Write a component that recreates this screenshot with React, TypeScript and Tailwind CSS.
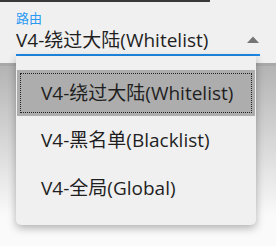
const font = { fontFamily: '"Open Sans", "Noto Sans CJK SC", sans-serif' };

const options = ["V4-绕过大陆(Whitelist)", "V4-黑名单(Blacklist)", "V4-全局(Global)"];

export default function App() {
  return (
    <div className="relative flex h-[246px] w-[276px] flex-col overflow-hidden bg-[#f0f0f0]" style={font}>
      <div className="h-[2px] w-[210px] bg-[#3a3a3a]" />
      <div className="px-4 pt-[8px]">
        <p className="text-[13px] leading-[16px] text-[#2b9af3]">路由</p>
        <div className="flex h-[30px] items-center justify-between border-b-2 border-[#1e88e5]">
          <span className="text-[19px] leading-[26px] text-[#1f1f1f]">V4-绕过大陆(Whitelist)</span>
          <svg width="12" height="7" viewBox="0 0 12 7" className="mr-[1px] mb-[1px]">
            <path d="M0 7 L6 0.5 L12 7 Z" fill="#757575" />
          </svg>
        </div>
      </div>

      <div className="mt-[7px] flex flex-1 flex-col border-t-[3px] border-[#a9a9a9]">
        <div className="h-[150px] bg-gradient-to-b from-[#b4b4b4] to-[#fafafa]" />
        <div className="flex-1 bg-[#fafafa]" />
      </div>

      <div className="absolute left-[16px] top-[56px] h-[169px] w-[240px] rounded-b-[5px] bg-[#f0f0f0] pt-[14px] shadow-[0_3px_8px_rgba(0,0,0,0.3)]">
        {options.map((opt, i) =>
          i === 0 ? (
            <div key={opt} className="mx-px h-[46px] bg-[#adadad] p-[3px]">
              <div className="flex h-full items-center border border-dotted border-[#222] pl-[20px] text-[19px] text-[#1f1f1f]">
                {opt}
              </div>
            </div>
          ) : (
            <div key={opt} className="flex h-[48px] items-center pl-[25px] text-[19px] text-[#1f1f1f]">
              {opt}
            </div>
          )
        )}
      </div>
    </div>
  );
}
